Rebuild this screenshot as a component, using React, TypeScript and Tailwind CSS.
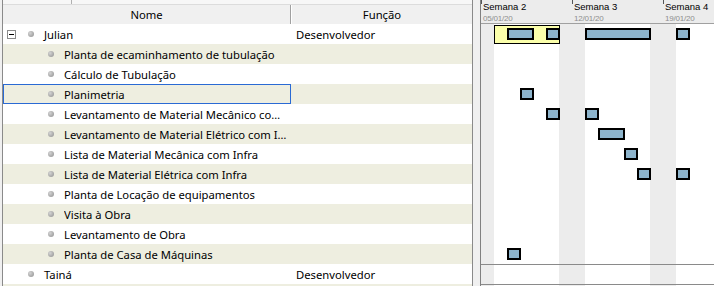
import React from 'react';

type Task = {
  name: string;
  bars: string[];
  focus?: boolean;
};

const tasks: Task[] = [
  { name: 'Planta de ecaminhamento de tubulação', bars: [] },
  { name: 'Cálculo de Tubulação', bars: [] },
  { name: 'Planimetria', bars: ['col-start-4 col-span-1'], focus: true },
  { name: 'Levantamento de Material Mecânico com Infra', bars: ['col-start-6 col-span-1', 'col-start-9 col-span-1'] },
  { name: 'Levantamento de Material Elétrico com Infra', bars: ['col-start-10 col-span-2'] },
  { name: 'Lista de Material Mecânica com Infra', bars: ['col-start-12 col-span-1'] },
  { name: 'Lista de Material Elétrica com Infra', bars: ['col-start-13 col-span-1', 'col-start-16 col-span-1'] },
  { name: 'Planta de Locação de equipamentos', bars: [] },
  { name: 'Visita à Obra', bars: [] },
  { name: 'Levantamento de Obra', bars: [] },
  { name: 'Planta de Casa de Máquinas', bars: ['col-start-3 col-span-1'] },
];

// true = weekend (shaded column)
const days = [true, false, false, false, false, false, true, true, false, false, false, false, false, true, true, false, false, false];

const weeks = [
  { label: 'Semana 2', date: '05/01/20' },
  { label: 'Semana 3', date: '12/01/20' },
  { label: 'Semana 4', date: '19/01/20' },
];

const Bullet = () => (
  <span className="w-[6px] h-[6px] rounded-full bg-[radial-gradient(circle_at_35%_35%,#d4d4d4,#8e8e8e)] shrink-0" />
);

const Bar = ({ cls }: { cls: string }) => (
  <div className={`${cls} row-start-1 h-[12px] w-[calc(100%+1px)] border-2 border-black bg-[#8db4cc]`} />
);

export default function App() {
  return (
    <div className="w-[714px] h-[286px] overflow-hidden flex bg-[#f0f0f0] text-black font-['Noto_Sans',sans-serif] text-[11.25px] leading-[15px]">
      {/* tree / grid side */}
      <div className="w-[473px] pl-[2px] shrink-0 flex flex-col">
        <div className="flex-1 flex flex-col border-l border-r border-[#8a8a8a] bg-white overflow-hidden">
          <div className="h-[4px] shrink-0 bg-[#f7f7f7] flex">
            <div className="w-[69px] border-r border-[#b0b0b0]" />
          </div>
          <div className="h-[20px] shrink-0 flex bg-[#f0f0f0] border-t border-[#dcdcdc]">
            <div className="w-[288px] flex items-center justify-center border-r border-[#a0a0a0]">Nome</div>
            <div className="flex-1 flex items-center justify-center border-l border-white">Função</div>
          </div>

          <div className="h-[20px] shrink-0 flex items-center bg-white">
            <div className="w-[288px] flex items-center">
              <span className="ml-[4px] w-[9px] h-[9px] border border-[#8a8a8a] bg-white flex items-center justify-center">
                <span className="w-[5px] h-px bg-black" />
              </span>
              <span className="ml-[12px] flex"><Bullet /></span>
              <span className="ml-[10px]">Julian</span>
            </div>
            <div className="flex-1 pl-[5px]">Desenvolvedor</div>
          </div>

          {tasks.map((t, i) => (
            <div key={t.name} className={`h-[20px] shrink-0 flex items-center ${i % 2 === 0 ? 'bg-[#eeeee0]' : 'bg-white'}`}>
              <div
                className={`w-[288px] h-full flex items-center pr-[4px] ${
                  t.focus ? 'border border-[#2a6ad4] pl-[44px]' : 'pl-[45px]'
                }`}
              >
                <Bullet />
                <span className="ml-[10px] truncate">{t.name}</span>
              </div>
              <div className="flex-1" />
            </div>
          ))}

          <div className="h-[20px] shrink-0 flex items-center bg-white">
            <div className="w-[288px] flex items-center pl-[25px]">
              <Bullet />
              <span className="ml-[10px]">Tainá</span>
            </div>
            <div className="flex-1 pl-[5px]">Desenvolvedor</div>
          </div>
          <div className="h-[20px] shrink-0 bg-[#eeeee0]" />
        </div>
      </div>

      <div className="w-[7px] shrink-0" />

      {/* gantt side */}
      <div className="flex-1 flex flex-col border-l border-[#808080] font-['Liberation_Sans',Arial,sans-serif]">
        <div className="h-[24px] flex bg-[#ececec] border-b border-[#a0a0a0] shrink-0">
          {weeks.map((w) => (
            <div key={w.label} className="w-[91px] shrink-0 flex">
              <div className="w-px h-[4px] bg-[#555]" />
              <div className="pl-[1px] flex flex-col">
                <span className="text-[9.5px] leading-[10px] mt-[2px]">{w.label}</span>
                <span className="text-[8px] leading-[8px] mt-[3px] -tracking-[0.2px] text-[#8f8f8f]">{w.date}</span>
              </div>
            </div>
          ))}
        </div>

        <div className="relative flex-1">
          <div className="absolute inset-0 flex">
            {days.map((we, i) => (
              <div key={i} className={`w-[13px] shrink-0 h-full ${we ? 'bg-[#ececec]' : 'bg-white'}`} />
            ))}
            <div className="flex-1 bg-white" />
          </div>

          <div className="relative flex flex-col">
            <div className="h-[20px] grid grid-cols-[repeat(18,13px)] items-center">
              <div className="col-start-2 col-span-5 row-start-1 h-[19px] w-[calc(100%+1px)] border border-black bg-[#fbffab]" />
              <Bar cls="col-start-3 col-span-2" />
              <Bar cls="col-start-6 col-span-1" />
              <Bar cls="col-start-9 col-span-5" />
              <Bar cls="col-start-16 col-span-1" />
            </div>
            {tasks.map((t) => (
              <div key={t.name} className="h-[20px] grid grid-cols-[repeat(18,13px)] items-center">
                {t.bars.map((b) => (
                  <Bar key={b} cls={b} />
                ))}
              </div>
            ))}
            <div className="h-[21px] border-y border-[#8a8a8a]" />
          </div>
        </div>
      </div>
    </div>
  );
}
